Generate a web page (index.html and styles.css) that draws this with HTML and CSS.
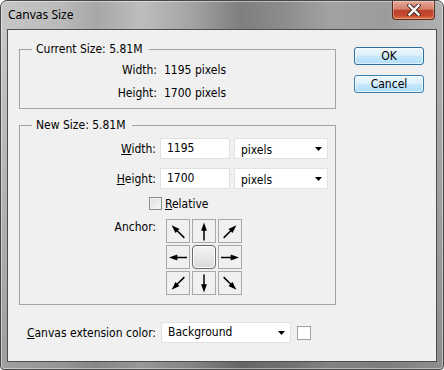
FILE: index.html
```html
<!DOCTYPE html>
<html>
<head>
<meta charset="utf-8">
<link rel="stylesheet" href="styles.css">
</head>
<body>
<svg class="defs" width="0" height="0">
  <symbol id="arr" viewBox="0 0 24 24">
    <path d="M12 3.5 L14.9 11.8 L9.1 11.8 Z" fill="#000"/>
    <path d="M12 11 V21.5" stroke="#000" stroke-width="1.5"/>
  </symbol>
</svg>
<div class="window">
  <div class="titlebar">
    <span class="title">Canvas Size</span>
    <div class="close">
      <svg width="14" height="12" viewBox="0 0 14 12">
        <path d="M2.5 1.5 L11.5 10.5 M11.5 1.5 L2.5 10.5" stroke="#4a2a22" stroke-width="4.4" stroke-linecap="square"/>
        <path d="M2.5 1.5 L11.5 10.5 M11.5 1.5 L2.5 10.5" stroke="#fff" stroke-width="2.4" stroke-linecap="square"/>
      </svg>
    </div>
  </div>
  <div class="client">
    <div class="main">
      <fieldset class="group current">
        <legend>Current Size: 5.81M</legend>
        <div class="info">
          <span class="lbl">Width:</span><span>1195 pixels</span>
          <span class="lbl">Height:</span><span>1700 pixels</span>
        </div>
      </fieldset>
      <fieldset class="group newsize">
        <legend>New Size: 5.81M</legend>
        <div class="row">
          <span class="lbl"><u>W</u>idth:</span>
          <div class="input">1195</div>
          <div class="select unit"><span class="val">pixels</span><svg class="caret" width="7" height="4" viewBox="0 0 7 4"><path d="M0 0 H7 L3.5 4 Z" fill="#000"/></svg></div>
        </div>
        <div class="row second">
          <span class="lbl"><u>H</u>eight:</span>
          <div class="input">1700</div>
          <div class="select unit"><span class="val">pixels</span><svg class="caret" width="7" height="4" viewBox="0 0 7 4"><path d="M0 0 H7 L3.5 4 Z" fill="#000"/></svg></div>
        </div>
        <div class="checkrow">
          <span class="check"></span><span class="checklabel"><u>R</u>elative</span>
        </div>
        <div class="anchorrow">
          <span class="lbl">Anchor:</span>
          <div class="anchor">
            <div class="cell"><svg width="24" height="24"><use href="#arr" transform="rotate(-45 12 12.5)"/></svg></div>
            <div class="cell"><svg width="24" height="24"><use href="#arr"/></svg></div>
            <div class="cell"><svg width="24" height="24"><use href="#arr" transform="rotate(45 12 12.5)"/></svg></div>
            <div class="cell"><svg width="24" height="24"><use href="#arr" transform="rotate(-90 12 12.5)"/></svg></div>
            <div class="cell center"></div>
            <div class="cell"><svg width="24" height="24"><use href="#arr" transform="rotate(90 12 12.5)"/></svg></div>
            <div class="cell"><svg width="24" height="24"><use href="#arr" transform="rotate(-135 12 12.5)"/></svg></div>
            <div class="cell"><svg width="24" height="24"><use href="#arr" transform="rotate(180 12 12.5)"/></svg></div>
            <div class="cell"><svg width="24" height="24"><use href="#arr" transform="rotate(135 12 12.5)"/></svg></div>
          </div>
        </div>
      </fieldset>
      <div class="ext">
        <span class="lbl"><u>C</u>anvas extension color:</span>
        <div class="select extsel">Background<svg class="caret" width="7" height="4" viewBox="0 0 7 4"><path d="M0 0 H7 L3.5 4 Z" fill="#000"/></svg></div>
        <span class="swatch"></span>
      </div>
    </div>
    <div class="buttons">
      <div class="btn ok">OK</div>
      <div class="btn">Cancel</div>
    </div>
  </div>
</div>
</body>
</html>
```
FILE: styles.css
```css
* { box-sizing: border-box; }
html, body { margin: 0; padding: 0; background: #fff; }
body { width: 444px; height: 370px; overflow: hidden; }
.defs { position: absolute; }

.window {
  width: 444px;
  height: 370px;
  border: 1px solid #474747;
  border-radius: 7px 7px 4px 4px;
  background:
    linear-gradient(to bottom, rgba(0,0,0,0) 0, rgba(0,0,0,0) 40px, rgba(0,0,0,.2) 100%),
    linear-gradient(to right, #c6c6c6 0, #bababa 60px, #a7a7a7 95px, #bdbdbd 140px, #a1a1a1 195px, #7e7e7e 240px, #8d8d8d 285px, #a2a2a2 330px, #9c9c9c 385px, #b2b2b2 444px);
  box-shadow: inset 0 0 0 1px rgba(255,255,255,.45);
  display: flex;
  flex-direction: column;
  font-family: "DejaVu Sans Condensed", "DejaVu Sans", sans-serif;
  font-stretch: condensed;
  font-size: 12px;
  color: #000;
}

.titlebar {
  height: 28px;
  display: flex;
  align-items: flex-start;
  padding-left: 7px;
}
.title {
  font-family: "Noto Sans", sans-serif;
  font-stretch: normal;
  font-size: 12px;
  line-height: 16px;
  margin-top: 6px;
}
.close {
  margin-left: auto;
  margin-right: 8px;
  width: 43px;
  height: 19px;
  border: 1px solid #5b2a20;
  border-top: none;
  border-radius: 0 0 4px 4px;
  background: linear-gradient(#e6a898 0%, #d5806b 45%, #bc432c 52%, #c4482e 80%, #df7c4f 100%);
  box-shadow: inset 0 0 0 1px rgba(255,255,255,.3);
  display: flex;
  align-items: center;
  justify-content: center;
}

.client {
  flex: 1;
  margin: 0 6px 7px;
  border: 1px solid #4e4e4e;
  background: #f0f0f0;
  display: flex;
  padding: 12px 12px 0 11px;
  gap: 18px;
}

.main {
  width: 317px;
  display: flex;
  flex-direction: column;
}

.group {
  margin: 0;
  border: 1px solid #a3a3a3;
  min-width: 0;
}
.group legend {
  margin-left: 12px;
  padding: 0 6px 0 4px;
  line-height: 14px;
}
.current { padding: 7px 0 8px; }
.info {
  display: grid;
  grid-template-columns: 137px auto;
  column-gap: 7px;
  row-gap: 9px;
  line-height: 14px;
}
.info .lbl { text-align: right; }

.newsize { margin-top: 9px; padding: 6px 0 9px; }
.row {
  display: flex;
  align-items: center;
  height: 21px;
}
.row.second { margin-top: 9px; }
.row .lbl, .anchorrow .lbl, .ext .lbl {
  width: 136px;
  text-align: right;
  flex: none;
}
.input {
  width: 70px;
  height: 21px;
  margin-left: 4px;
  background: #fff;
  border: 1px solid #e0e0e0;
  padding-left: 6px;
  line-height: 19px;
}
.select {
  height: 21px;
  background: #fff;
  border: 1px solid #e2e2e2;
  padding-left: 6px;
  display: flex;
  align-items: center;
  line-height: 19px;
}
.select .caret { margin-left: auto; margin-right: 5px; }
.unit { width: 94px; margin-left: 4px; }
.unit .val { margin-top: 4px; line-height: 15px; }

.checkrow {
  margin-top: 8px;
  padding-left: 129px;
  display: flex;
  align-items: center;
  height: 13px;
}
.check {
  width: 13px;
  height: 13px;
  border: 1px solid #8f8f8f;
  background: linear-gradient(135deg, #dcdcdc, #fafafa);
  box-shadow: inset 0 0 0 1px #f2f2f2;
}
.checklabel { margin-left: 3px; line-height: 14px; }

.anchorrow {
  margin-top: 9px;
  display: flex;
  align-items: flex-start;
}
.anchorrow .lbl { line-height: 14px; margin-top: 1px; }
.anchor {
  margin-left: 10px;
  display: grid;
  grid-template-columns: repeat(3, 24px);
  grid-auto-rows: 24px;
  gap: 2px;
}
.cell {
  border: 1px solid #a8a8a8;
  display: flex;
  align-items: center;
  justify-content: center;
}
.cell svg { flex: none; }
.cell.center {
  border-color: #6b6b6b;
  border-radius: 4px;
  background: linear-gradient(#f5f5f5, #d9d9d9);
  box-shadow: inset 0 0 0 1px #fbfbfb;
}

.ext {
  margin-top: 17px;
  padding-left: 1px;
  display: flex;
  align-items: center;
}
.extsel { width: 130px; margin-left: 5px; }
.swatch {
  width: 14px;
  height: 14px;
  margin-left: 6px;
  background: #fff;
  border: 1px solid #a0a0a0;
}

.buttons {
  width: 70px;
  padding-top: 5px;
  display: flex;
  flex-direction: column;
  gap: 10px;
}
.btn {
  height: 18px;
  border: 1px solid #3c7fb1;
  border-radius: 3px;
  background: linear-gradient(#ecf7fd 0%, #dff1fc 45%, #c6e8fb 52%, #b0ddf7 100%);
  box-shadow: inset 0 0 0 1px rgba(255,255,255,.6);
  text-align: center;
  line-height: 16px;
}
.btn.ok { border-color: #2f6f9f; }
```
